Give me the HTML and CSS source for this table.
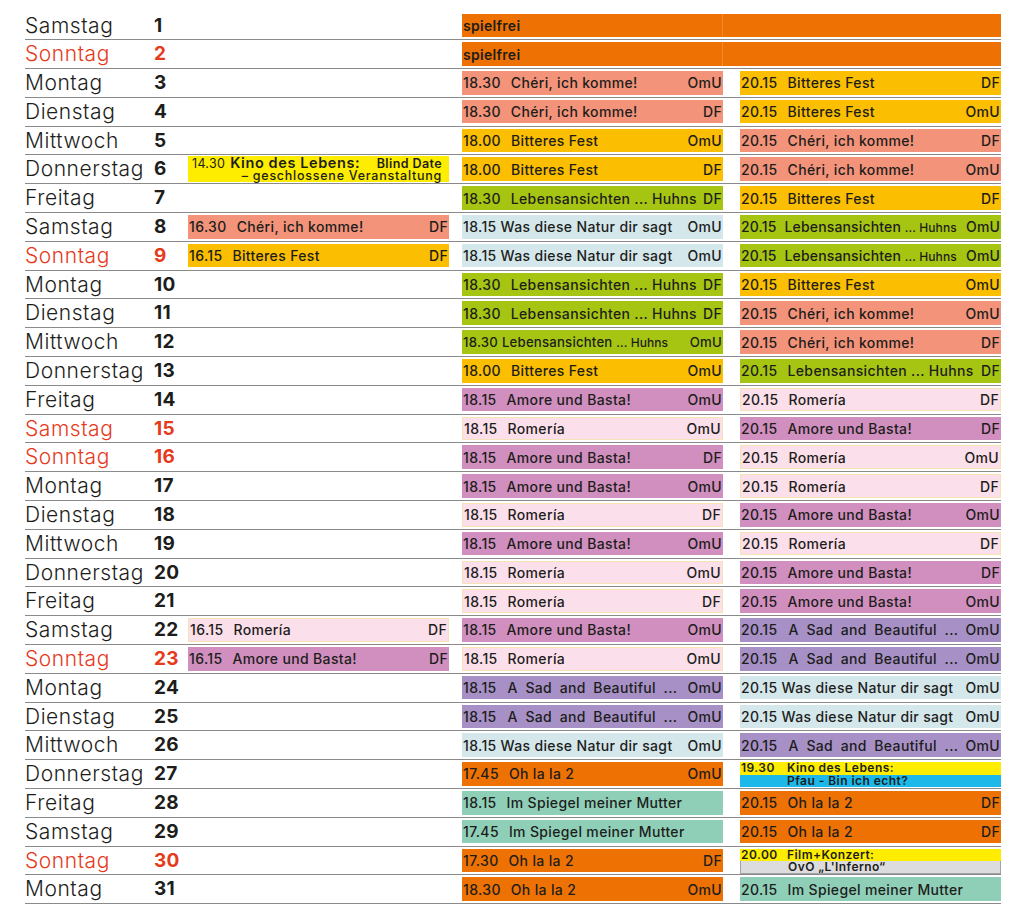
FILE: index.html
```html
<!DOCTYPE html>
<html lang="de">
<head>
<meta charset="utf-8">
<title>Programm</title>
<link rel="stylesheet" href="styles.css">
</head>
<body>
<div class="plan">

<div class="row"><div class="day">Samstag</div><div class="num">1</div><div class="slot a"></div><div class="slot free"><span class="fl">spielfrei</span><span class="fr"></span></div></div>

<div class="row sun"><div class="day">Sonntag</div><div class="num">2</div><div class="slot a"></div><div class="slot free"><span class="fl">spielfrei</span><span class="fr"></span></div></div>

<div class="row"><div class="day">Montag</div><div class="num">3</div><div class="slot a"></div>
<div class="slot b ev cheri"><span class="tm">18.30</span><span class="ti">Chéri, ich komme!</span><span class="tag">OmU</span></div>
<div class="slot c ev bitter"><span class="tm">20.15</span><span class="ti">Bitteres Fest</span><span class="tag">DF</span></div></div>

<div class="row"><div class="day">Dienstag</div><div class="num">4</div><div class="slot a"></div>
<div class="slot b ev cheri"><span class="tm">18.30</span><span class="ti">Chéri, ich komme!</span><span class="tag">DF</span></div>
<div class="slot c ev bitter"><span class="tm">20.15</span><span class="ti">Bitteres Fest</span><span class="tag">OmU</span></div></div>

<div class="row"><div class="day">Mittwoch</div><div class="num">5</div><div class="slot a"></div>
<div class="slot b ev bitter"><span class="tm">18.00</span><span class="ti">Bitteres Fest</span><span class="tag">OmU</span></div>
<div class="slot c ev cheri"><span class="tm">20.15</span><span class="ti">Chéri, ich komme!</span><span class="tag">DF</span></div></div>

<div class="row"><div class="day">Donnerstag</div><div class="num">6</div>
<div class="slot a kino"><div class="k1"><span class="ktm">14.30</span><span class="kt">Kino des Lebens:</span><span class="kb">Blind Date</span></div><div class="k2">– geschlossene Veranstaltung</div></div>
<div class="slot b ev bitter"><span class="tm">18.00</span><span class="ti">Bitteres Fest</span><span class="tag">DF</span></div>
<div class="slot c ev cheri"><span class="tm">20.15</span><span class="ti">Chéri, ich komme!</span><span class="tag">OmU</span></div></div>

<div class="row"><div class="day">Freitag</div><div class="num">7</div><div class="slot a"></div>
<div class="slot b ev leben"><span class="tm">18.30</span><span class="ti">Lebensansichten ... Huhns</span><span class="tag">DF</span></div>
<div class="slot c ev bitter"><span class="tm">20.15</span><span class="ti">Bitteres Fest</span><span class="tag">DF</span></div></div>

<div class="row"><div class="day">Samstag</div><div class="num">8</div>
<div class="slot a ev cheri"><span class="tm">16.30</span><span class="ti">Chéri, ich komme!</span><span class="tag">DF</span></div>
<div class="slot b ev natur"><span class="tm">18.15</span><span class="ti narrow">Was diese Natur dir sagt</span><span class="tag">OmU</span></div>
<div class="slot c ev leben tight"><span class="tm">20.15</span><span class="ti">Lebensansichten <span class="sm">... Huhns</span></span><span class="tag">OmU</span></div></div>

<div class="row sun"><div class="day">Sonntag</div><div class="num">9</div>
<div class="slot a ev bitter"><span class="tm">16.15</span><span class="ti">Bitteres Fest</span><span class="tag">DF</span></div>
<div class="slot b ev natur"><span class="tm">18.15</span><span class="ti narrow">Was diese Natur dir sagt</span><span class="tag">OmU</span></div>
<div class="slot c ev leben tight"><span class="tm">20.15</span><span class="ti">Lebensansichten <span class="sm">... Huhns</span></span><span class="tag">OmU</span></div></div>

<div class="row"><div class="day">Montag</div><div class="num">10</div><div class="slot a"></div>
<div class="slot b ev leben"><span class="tm">18.30</span><span class="ti">Lebensansichten ... Huhns</span><span class="tag">DF</span></div>
<div class="slot c ev bitter"><span class="tm">20.15</span><span class="ti">Bitteres Fest</span><span class="tag">OmU</span></div></div>

<div class="row"><div class="day">Dienstag</div><div class="num">11</div><div class="slot a"></div>
<div class="slot b ev leben"><span class="tm">18.30</span><span class="ti">Lebensansichten ... Huhns</span><span class="tag">DF</span></div>
<div class="slot c ev cheri"><span class="tm">20.15</span><span class="ti">Chéri, ich komme!</span><span class="tag">OmU</span></div></div>

<div class="row"><div class="day">Mittwoch</div><div class="num">12</div><div class="slot a"></div>
<div class="slot b ev leben small"><span class="tm">18.30</span><span class="ti narrow">Lebensansichten <span class="sm">... Huhns</span></span><span class="tag">OmU</span></div>
<div class="slot c ev cheri"><span class="tm">20.15</span><span class="ti">Chéri, ich komme!</span><span class="tag">DF</span></div></div>

<div class="row"><div class="day">Donnerstag</div><div class="num">13</div><div class="slot a"></div>
<div class="slot b ev bitter"><span class="tm">18.00</span><span class="ti">Bitteres Fest</span><span class="tag">OmU</span></div>
<div class="slot c ev leben"><span class="tm">20.15</span><span class="ti">Lebensansichten ... Huhns</span><span class="tag">DF</span></div></div>

<div class="row"><div class="day">Freitag</div><div class="num">14</div><div class="slot a"></div>
<div class="slot b ev amore"><span class="tm">18.15</span><span class="ti">Amore und Basta!</span><span class="tag">OmU</span></div>
<div class="slot c ev romeria"><span class="tm">20.15</span><span class="ti">Romería</span><span class="tag">DF</span></div></div>

<div class="row sun"><div class="day">Samstag</div><div class="num">15</div><div class="slot a"></div>
<div class="slot b ev romeria"><span class="tm">18.15</span><span class="ti">Romería</span><span class="tag">OmU</span></div>
<div class="slot c ev amore"><span class="tm">20.15</span><span class="ti">Amore und Basta!</span><span class="tag">DF</span></div></div>

<div class="row sun"><div class="day">Sonntag</div><div class="num">16</div><div class="slot a"></div>
<div class="slot b ev amore"><span class="tm">18.15</span><span class="ti">Amore und Basta!</span><span class="tag">DF</span></div>
<div class="slot c ev romeria"><span class="tm">20.15</span><span class="ti">Romería</span><span class="tag">OmU</span></div></div>

<div class="row"><div class="day">Montag</div><div class="num">17</div><div class="slot a"></div>
<div class="slot b ev amore"><span class="tm">18.15</span><span class="ti">Amore und Basta!</span><span class="tag">OmU</span></div>
<div class="slot c ev romeria"><span class="tm">20.15</span><span class="ti">Romería</span><span class="tag">DF</span></div></div>

<div class="row"><div class="day">Dienstag</div><div class="num">18</div><div class="slot a"></div>
<div class="slot b ev romeria"><span class="tm">18.15</span><span class="ti">Romería</span><span class="tag">DF</span></div>
<div class="slot c ev amore"><span class="tm">20.15</span><span class="ti">Amore und Basta!</span><span class="tag">OmU</span></div></div>

<div class="row"><div class="day">Mittwoch</div><div class="num">19</div><div class="slot a"></div>
<div class="slot b ev amore"><span class="tm">18.15</span><span class="ti">Amore und Basta!</span><span class="tag">OmU</span></div>
<div class="slot c ev romeria"><span class="tm">20.15</span><span class="ti">Romería</span><span class="tag">DF</span></div></div>

<div class="row"><div class="day">Donnerstag</div><div class="num">20</div><div class="slot a"></div>
<div class="slot b ev romeria"><span class="tm">18.15</span><span class="ti">Romería</span><span class="tag">OmU</span></div>
<div class="slot c ev amore"><span class="tm">20.15</span><span class="ti">Amore und Basta!</span><span class="tag">DF</span></div></div>

<div class="row"><div class="day">Freitag</div><div class="num">21</div><div class="slot a"></div>
<div class="slot b ev romeria"><span class="tm">18.15</span><span class="ti">Romería</span><span class="tag">DF</span></div>
<div class="slot c ev amore"><span class="tm">20.15</span><span class="ti">Amore und Basta!</span><span class="tag">OmU</span></div></div>

<div class="row"><div class="day">Samstag</div><div class="num">22</div>
<div class="slot a ev romeria"><span class="tm">16.15</span><span class="ti">Romería</span><span class="tag">DF</span></div>
<div class="slot b ev amore"><span class="tm">18.15</span><span class="ti">Amore und Basta!</span><span class="tag">OmU</span></div>
<div class="slot c ev sad"><span class="tm">20.15</span><span class="ti wide">A Sad and Beautiful ...</span><span class="tag">OmU</span></div></div>

<div class="row sun"><div class="day">Sonntag</div><div class="num">23</div>
<div class="slot a ev amore"><span class="tm">16.15</span><span class="ti">Amore und Basta!</span><span class="tag">DF</span></div>
<div class="slot b ev romeria"><span class="tm">18.15</span><span class="ti">Romería</span><span class="tag">OmU</span></div>
<div class="slot c ev sad"><span class="tm">20.15</span><span class="ti wide">A Sad and Beautiful ...</span><span class="tag">OmU</span></div></div>

<div class="row"><div class="day">Montag</div><div class="num">24</div><div class="slot a"></div>
<div class="slot b ev sad"><span class="tm">18.15</span><span class="ti wide">A Sad and Beautiful ...</span><span class="tag">OmU</span></div>
<div class="slot c ev natur"><span class="tm">20.15</span><span class="ti narrow">Was diese Natur dir sagt</span><span class="tag">OmU</span></div></div>

<div class="row"><div class="day">Dienstag</div><div class="num">25</div><div class="slot a"></div>
<div class="slot b ev sad"><span class="tm">18.15</span><span class="ti wide">A Sad and Beautiful ...</span><span class="tag">OmU</span></div>
<div class="slot c ev natur"><span class="tm">20.15</span><span class="ti narrow">Was diese Natur dir sagt</span><span class="tag">OmU</span></div></div>

<div class="row"><div class="day">Mittwoch</div><div class="num">26</div><div class="slot a"></div>
<div class="slot b ev natur"><span class="tm">18.15</span><span class="ti narrow">Was diese Natur dir sagt</span><span class="tag">OmU</span></div>
<div class="slot c ev sad"><span class="tm">20.15</span><span class="ti wide">A Sad and Beautiful ...</span><span class="tag">OmU</span></div></div>

<div class="row"><div class="day">Donnerstag</div><div class="num">27</div><div class="slot a"></div>
<div class="slot b ev ohla"><span class="tm">17.45</span><span class="ti">Oh la la 2</span><span class="tag">OmU</span></div>
<div class="slot c duo"><div class="d1 yel"><span class="dtm">19.30</span><span>Kino des Lebens:</span></div><div class="d2 blue">Pfau - Bin ich echt?</div></div></div>

<div class="row"><div class="day">Freitag</div><div class="num">28</div><div class="slot a"></div>
<div class="slot b ev spiegel"><span class="tm">18.15</span><span class="ti">Im Spiegel meiner Mutter</span></div>
<div class="slot c ev ohla"><span class="tm">20.15</span><span class="ti">Oh la la 2</span><span class="tag">DF</span></div></div>

<div class="row"><div class="day">Samstag</div><div class="num">29</div><div class="slot a"></div>
<div class="slot b ev spiegel"><span class="tm">17.45</span><span class="ti">Im Spiegel meiner Mutter</span></div>
<div class="slot c ev ohla"><span class="tm">20.15</span><span class="ti">Oh la la 2</span><span class="tag">DF</span></div></div>

<div class="row sun"><div class="day">Sonntag</div><div class="num">30</div><div class="slot a"></div>
<div class="slot b ev ohla"><span class="tm">17.30</span><span class="ti">Oh la la 2</span><span class="tag">DF</span></div>
<div class="slot c duo"><div class="d1 yel"><span class="dtm">20.00</span><span>Film+Konzert:</span></div><div class="d2 grey">OvO „L'Inferno“</div></div></div>

<div class="row"><div class="day">Montag</div><div class="num">31</div><div class="slot a"></div>
<div class="slot b ev ohla"><span class="tm">18.30</span><span class="ti">Oh la la 2</span><span class="tag">OmU</span></div>
<div class="slot c ev spiegel"><span class="tm">20.15</span><span class="ti">Im Spiegel meiner Mutter</span></div></div>

</div>
</body>
</html>
```

FILE: styles.css
```css
html, body {
  margin: 0;
  padding: 0;
  background: #ffffff;
}

body {
  font-family: "Inter", "Liberation Sans", sans-serif;
  color: #1d1d1b;
}

.plan {
  margin-left: 25px;
  padding-top: 11.5px;
  width: 976px;
}

.row {
  display: grid;
  grid-template-columns: 127px 36px 261px 274px 278px;
  height: 28.8px;
  box-sizing: border-box;
  border-bottom: 1px solid #8a8a8a;
  align-items: start;
}

.day {
  font-weight: 300;
  font-size: 21px;
  line-height: 28px;
  letter-spacing: 0.55px;
  white-space: nowrap;
}

.num {
  font-weight: 700;
  font-size: 19px;
  line-height: 28px;
  padding-left: 2px;
  letter-spacing: 0.3px;
}

.sun .day,
.sun .num {
  color: #e63a1c;
}

.slot {
  margin-top: 2px;
  height: 23.5px;
  box-sizing: border-box;
}

.b { margin-left: 13px; }
.c { margin-left: 17px; }

.ev {
  display: flex;
  align-items: center;
  font-size: 14px;
  font-weight: 500;
  white-space: nowrap;
  padding: 0 1px 0 1px;
  letter-spacing: 0.35px;
}

.tm { flex: none; }
.ti { margin-left: 10px; }
.ti.narrow { margin-left: 4px; }
.ti.wide { margin-left: 11px; word-spacing: 3.5px; }
.tag { margin-left: auto; }
.sm { font-size: 12px; letter-spacing: 0.1px; }
.small { font-size: 13.2px; letter-spacing: 0.2px; }
.tight { letter-spacing: 0.15px; }
.tight .ti { margin-left: 8px; }

.free {
  grid-column: 4 / 6;
  margin-left: 13px;
  display: flex;
  background: #ee7203;
  font-size: 14px;
  font-weight: 600;
  letter-spacing: 0.3px;
  align-items: center;
}
.fl {
  width: 261px;
  height: 100%;
  display: flex;
  align-items: center;
  border-right: 1px solid #f08a2e;
  box-sizing: border-box;
  padding-left: 1px;
}

.cheri { background: #f2937a; }
.bitter { background: #fbbe00; }
.leben { background: #a6c512; }
.natur { background: #d4e7eb; }
.romeria { background: #fbdfea; border: 1px solid #f6e2b5; }
.amore { background: #d08fbf; }
.sad { background: #a690c6; }
.ohla { background: #ee7203; }
.spiegel { background: #8fcfb8; }

.kino {
  background: #ffed00;
  height: 26px;
  margin-top: 1px;
  padding: 1px 7px 0 4px;
  font-size: 12.5px;
  line-height: 12px;
  white-space: nowrap;
}
.k1 {
  display: flex;
  align-items: baseline;
}
.ktm { font-weight: 400; letter-spacing: 0.3px; }
.kt { font-weight: 600; font-size: 14.5px; margin-left: 5px; letter-spacing: 0.6px; }
.kb { font-weight: 600; margin-left: auto; letter-spacing: 0.4px; }
.k2 {
  text-align: right;
  font-weight: 500;
  letter-spacing: 0.75px;
}

.duo {
  height: 25px;
  display: flex;
  flex-direction: column;
  font-size: 12px;
  font-weight: 600;
  letter-spacing: 0.45px;
  white-space: nowrap;
}
.d1, .d2 {
  flex: 1;
  display: flex;
  align-items: center;
  line-height: 12px;
}
.d1 { padding-left: 1px; }
.d2 { padding-left: 47px; }
.dtm { width: 46px; flex: none; }
.yel { background: #ffed00; }
.blue { background: #1cb8ea; }
.grey { background: #dcdcde; border: 1px solid #a3a3a3; border-top: none; box-sizing: border-box; }
```
